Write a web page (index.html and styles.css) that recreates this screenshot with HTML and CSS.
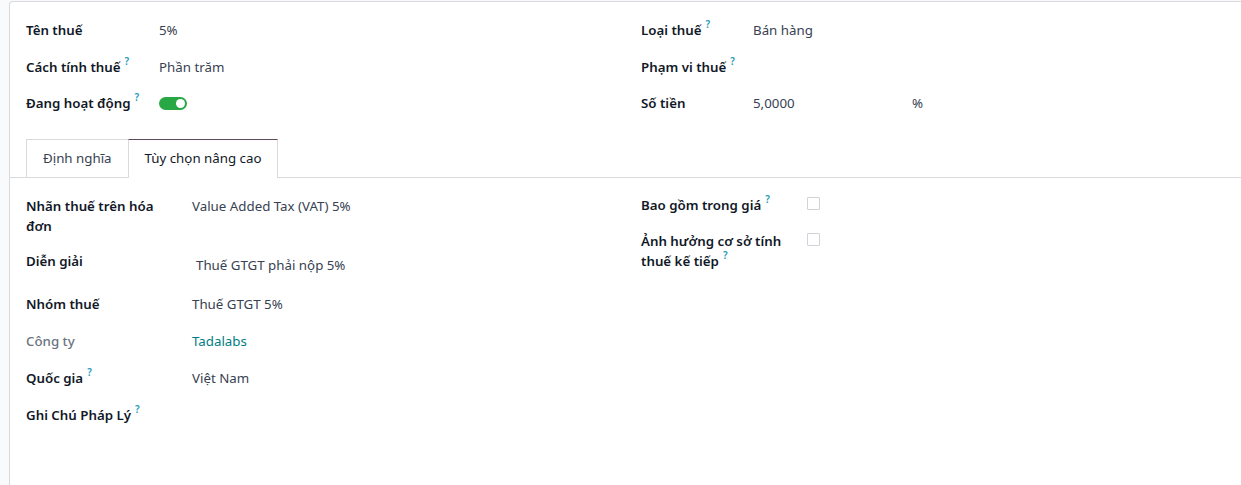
FILE: index.html
```html
<!DOCTYPE html>
<html lang="vi">
<head>
<meta charset="utf-8">
<title>Thuế</title>
<link rel="stylesheet" href="styles.css">
</head>
<body>
<div class="sheet">
  <div class="top-group">
    <div class="col col-top-left">
      <div class="row"><div class="label">Tên thuế</div><div class="value">5%</div></div>
      <div class="row"><div class="label">Cách tính thuế<sup class="help">?</sup></div><div class="value">Phần trăm</div></div>
      <div class="row"><div class="label">Đang hoạt động<sup class="help">?</sup></div><div class="value"><span class="toggle"><span class="knob"></span></span></div></div>
    </div>
    <div class="col col-top-right">
      <div class="row"><div class="label">Loại thuế<sup class="help">?</sup></div><div class="value">Bán hàng</div></div>
      <div class="row"><div class="label">Phạm vi thuế<sup class="help">?</sup></div><div class="value"></div></div>
      <div class="row"><div class="label">Số tiền</div><div class="value amount"><span>5,0000</span><span class="unit">%</span></div></div>
    </div>
  </div>

  <div class="tabs">
    <div class="tab">Định nghĩa</div>
    <div class="tab active">Tùy chọn nâng cao</div>
  </div>

  <div class="tab-pane">
    <div class="col col-wide">
      <div class="row row-first"><div class="label">Nhãn thuế trên hóa đơn</div><div class="value">Value Added Tax (VAT) 5%</div></div>
      <div class="row"><div class="label">Diễn giải</div><div class="value textarea">Thuế GTGT phải nộp 5%</div></div>
      <div class="row"><div class="label">Nhóm thuế</div><div class="value">Thuế GTGT 5%</div></div>
      <div class="row"><div class="label muted">Công ty</div><div class="value link">Tadalabs</div></div>
      <div class="row"><div class="label">Quốc gia<sup class="help">?</sup></div><div class="value">Việt Nam</div></div>
      <div class="row"><div class="label">Ghi Chú Pháp Lý<sup class="help">?</sup></div><div class="value"></div></div>
    </div>
    <div class="col col-wide col-checks">
      <div class="row"><div class="label">Bao gồm trong giá<sup class="help">?</sup></div><div class="value"><span class="checkbox"></span></div></div>
      <div class="row"><div class="label">Ảnh hưởng cơ sở tính thuế kế tiếp<sup class="help">?</sup></div><div class="value"><span class="checkbox"></span></div></div>
    </div>
  </div>
</div>
</body>
</html>
```

FILE: styles.css
```css
html, body {
  margin: 0;
  padding: 0;
  background: #f9fafb;
  overflow: hidden;
}
body {
  font-family: "Noto Sans", "Open Sans", sans-serif;
  font-size: 13.3px;
  line-height: 20px;
  color: #374151;
  width: 1241px;
  height: 485px;
}
.sheet {
  margin: 1px 0 0 9px;
  width: 1240px;
  height: 484px;
  background: #ffffff;
  border: 1px solid #d8dadd;
  border-bottom: none;
  border-radius: 4px 4px 0 0;
  box-sizing: border-box;
}
.top-group {
  display: grid;
  grid-template-columns: 615px 600px;
  padding: 10px 0 0 16px;
}
.col {
  display: flex;
  flex-direction: column;
}
.row {
  display: grid;
  padding: 8px 0 8.5px;
  align-items: start;
}
.col-top-left .row { grid-template-columns: 133px 1fr; }
.col-top-right .row { grid-template-columns: 112px 1fr; }
.col-wide .row { grid-template-columns: 166px 1fr; }
.tab-pane .row { padding: 8px 0 9px; }
.tab-pane .row.row-first { padding-bottom: 7px; }
.tab-pane .col-checks .row { padding: 7px 0 9px; }
.label {
  font-weight: 600;
  color: #111827;
  padding-right: 16px;
}
.label.muted {
  color: #6b7280;
  font-weight: 500;
}
.help {
  color: #1f9bb8;
  font-size: 10px;
  font-weight: 600;
  margin-left: 4px;
  vertical-align: top;
  position: relative;
  top: -6px;
}
.value { color: #374151; }
.value.link { color: #017e84; }
.amount {
  display: grid;
  grid-template-columns: 159px auto;
}
.toggle {
  display: inline-block;
  width: 28px;
  height: 13px;
  margin-top: 4px;
  border-radius: 7px;
  background: #28a745;
  position: relative;
  vertical-align: top;
}
.knob {
  position: absolute;
  right: 2px;
  top: 2px;
  width: 9px;
  height: 9px;
  border-radius: 50%;
  background: #fff;
}
.tabs {
  display: flex;
  margin-top: 17.5px;
  padding-left: 16px;
  border-bottom: 1px solid #d8dadd;
}
.tab {
  height: 37px;
  line-height: 37px;
  padding: 0 16px;
  border: 1px solid #d8dadd;
  border-bottom: none;
  color: #374151;
  margin-right: -1px;
  margin-bottom: -1px;
  background: #fff;
}
.tab.active {
  border-top-color: #5f4a5b;
  color: #111827;
  height: 38px;
}
.tab-pane {
  display: grid;
  grid-template-columns: 615px 600px;
  padding: 10px 0 0 16px;
}
.textarea {
  padding: 4px 0 2px 4px;
}
.checkbox {
  display: inline-block;
  width: 13px;
  height: 13px;
  box-sizing: border-box;
  border: 1px solid #d0d3d7;
  border-radius: 1px;
  background: #fff;
  margin-top: 2px;
  vertical-align: top;
}
```
